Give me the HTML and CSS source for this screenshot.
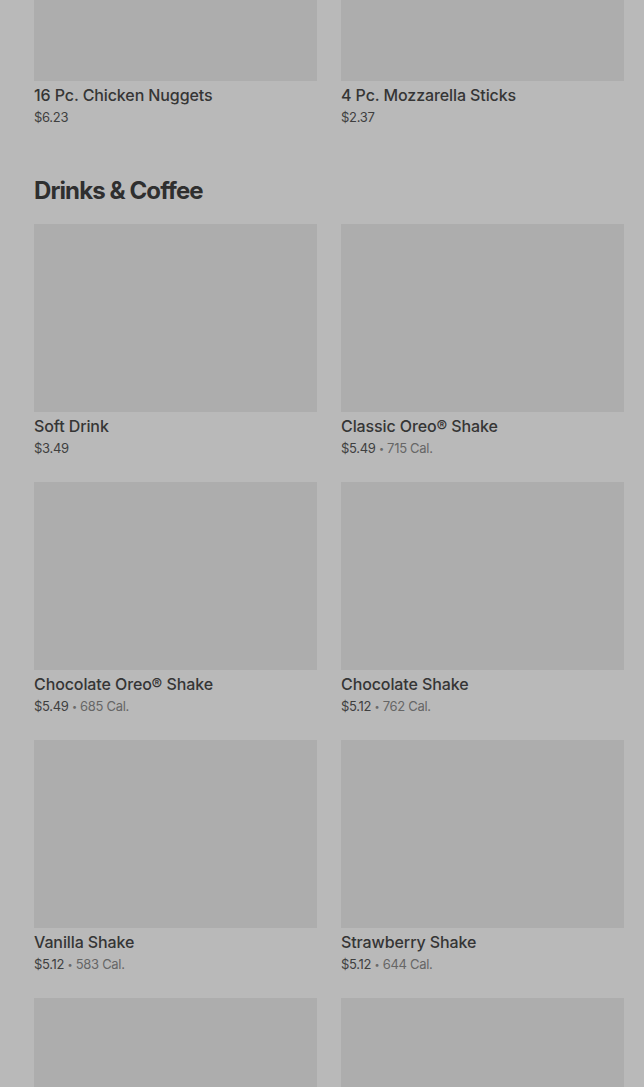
FILE: index.html
```html
<!DOCTYPE html>
<html lang="en">
<head>
    <meta charset="UTF-8">
    <meta name="viewport" content="width=device-width, initial-scale=1.0">
    <title>Menu</title>
    <link rel="stylesheet" href="styles.css">
</head>
<body>

    <main class="menu">
        <section class="menu-section">
            <div class="item-grid">
                <div class="item">
                    <div class="item-image"></div>
                    <p class="item-name">16 Pc. Chicken Nuggets</p>
                    <p class="item-meta">$6.23</p>
                </div>
                <div class="item">
                    <div class="item-image"></div>
                    <p class="item-name">4 Pc. Mozzarella Sticks</p>
                    <p class="item-meta">$2.37</p>
                </div>
            </div>
        </section>

        <section class="menu-section">
            <h2 class="section-title">Drinks &amp; Coffee</h2>
            <div class="item-grid">
                <div class="item">
                    <div class="item-image"></div>
                    <p class="item-name">Soft Drink</p>
                    <p class="item-meta">$3.49</p>
                </div>
                <div class="item">
                    <div class="item-image"></div>
                    <p class="item-name">Classic Oreo® Shake</p>
                    <p class="item-meta">$5.49 <span class="dot">•</span> <span class="cal">715 Cal.</span></p>
                </div>
                <div class="item">
                    <div class="item-image"></div>
                    <p class="item-name">Chocolate Oreo® Shake</p>
                    <p class="item-meta">$5.49 <span class="dot">•</span> <span class="cal">685 Cal.</span></p>
                </div>
                <div class="item">
                    <div class="item-image"></div>
                    <p class="item-name">Chocolate Shake</p>
                    <p class="item-meta">$5.12 <span class="dot">•</span> <span class="cal">762 Cal.</span></p>
                </div>
                <div class="item">
                    <div class="item-image"></div>
                    <p class="item-name">Vanilla Shake</p>
                    <p class="item-meta">$5.12 <span class="dot">•</span> <span class="cal">583 Cal.</span></p>
                </div>
                <div class="item">
                    <div class="item-image"></div>
                    <p class="item-name">Strawberry Shake</p>
                    <p class="item-meta">$5.12 <span class="dot">•</span> <span class="cal">644 Cal.</span></p>
                </div>
                <!-- next row is below the fold -->
                <div class="item">
                    <div class="item-image"></div>
                </div>
                <div class="item">
                    <div class="item-image"></div>
                </div>
            </div>
        </section>
    </main>

</body>
</html>
```

FILE: styles.css
```css
body {
    margin: 0;
    background-color: #b9b9b9;
    font-family: Inter, "Noto Sans", sans-serif;
    color: #333;
    overflow: hidden;
}

/* page is scrolled, first row is partly out of view */
.menu {
    margin-top: -107px;
    padding: 0 20px 0 34px;
}

.menu-section {
    margin-bottom: 48px;
}

.section-title {
    margin: 0 0 17px;
    font-size: 24px;
    line-height: 32px;
    font-weight: 700;
    letter-spacing: -0.9px;
    color: #2f2f2f;
}

.item-grid {
    display: grid;
    grid-template-columns: 1fr 1fr;
    column-gap: 24px;
    row-gap: 24px;
}

.item-image {
    height: 188px;
    background-color: #adadad;
}

.item-name {
    margin: 3px 0 0;
    font-size: 16px;
    line-height: 22px;
    font-weight: 500;
    letter-spacing: -0.1px;
    color: #353535;
}

.item-meta {
    margin: 1px 0 0;
    height: 20px;
    font-size: 13px;
    line-height: 20px;
    letter-spacing: -0.3px;
    color: #3f3f3f;
}

.item-meta .dot {
    font-size: 9px;
    line-height: 1;
    vertical-align: 1px;
    color: #6a6a6a;
}

.item-meta .cal {
    color: #666;
}
```
